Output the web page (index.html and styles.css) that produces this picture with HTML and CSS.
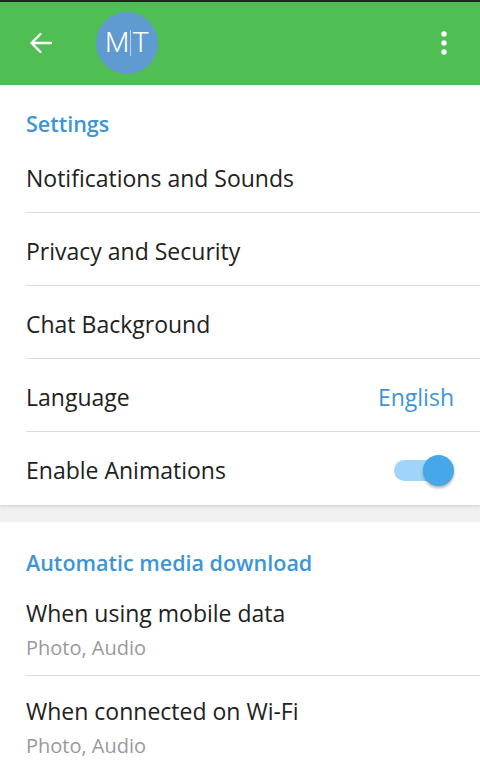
FILE: index.html
```html
<!DOCTYPE html>
<html lang="en">

<head>
  <meta charset="UTF-8">
  <title>Settings</title>
  <link rel="stylesheet" href="styles.css">
</head>

<body>
  <div class="status-line"></div>

  <!-- Header -->
  <header class="header">
    <button class="icon-button back-button">
      <svg width="26" height="26" viewBox="0 0 26 26">
        <path d="M23 13H3.5M12.5 4L3.5 13l9 9" fill="none" stroke="#fff" stroke-width="2.4" stroke-linecap="round" stroke-linejoin="round"/>
      </svg>
    </button>
    <div class="avatar">M<span class="caret"></span>T</div>
    <div class="spacer"></div>
    <button class="icon-button menu-button">
      <svg width="8" height="26" viewBox="0 0 8 26">
        <circle cx="4" cy="4" r="2.7" fill="#fff"/>
        <circle cx="4" cy="13" r="2.7" fill="#fff"/>
        <circle cx="4" cy="22" r="2.7" fill="#fff"/>
      </svg>
    </button>
  </header>

  <!-- Settings section -->
  <section class="section">
    <h2 class="section-title">Settings</h2>
    <div class="row">
      <span class="row-label">Notifications and Sounds</span>
    </div>
    <div class="row">
      <span class="row-label">Privacy and Security</span>
    </div>
    <div class="row">
      <span class="row-label">Chat Background</span>
    </div>
    <div class="row">
      <span class="row-label">Language</span>
      <span class="row-value">English</span>
    </div>
    <div class="row last">
      <span class="row-label">Enable Animations</span>
      <span class="toggle on"><span class="toggle-thumb"></span></span>
    </div>
  </section>

  <div class="section-gap"></div>

  <!-- Media section -->
  <section class="section">
    <h2 class="section-title media-title">Automatic media download</h2>
    <div class="row two-line">
      <span class="row-label">When using mobile data</span>
      <span class="row-sub">Photo, Audio</span>
    </div>
    <div class="row two-line last">
      <span class="row-label">When connected on Wi-Fi</span>
      <span class="row-sub">Photo, Audio</span>
    </div>
  </section>
</body>

</html>
```

FILE: styles.css
```css
body {
  margin: 0;
  padding: 0;
  background-color: #f0f0f0;
  font-family: "Open Sans", "Noto Sans", sans-serif;
  overflow: hidden;
}

.status-line {
  height: 2px;
  background-color: #222;
}

.header {
  display: flex;
  align-items: center;
  height: 83px;
  padding: 0 32px 0 28px;
  background-color: #4fbf53;
  box-sizing: border-box;
}

.icon-button {
  display: flex;
  align-items: center;
  justify-content: center;
  padding: 0;
  border: none;
  background: none;
  cursor: pointer;
}

.back-button {
  width: 26px;
  height: 26px;
  margin-top: -2px;
}

.avatar {
  display: flex;
  align-items: center;
  justify-content: center;
  width: 62px;
  height: 62px;
  margin-left: 42px;
  margin-top: -2px;
  border-radius: 50%;
  background-color: #5f9bd0;
  color: #fff;
  font-family: "Roboto", sans-serif;
  font-weight: 300;
  font-size: 28px;
}

.caret {
  display: inline-block;
  width: 1px;
  height: 26px;
  margin: 0 1px 0 1px;
  background-color: #b8d4ef;
}

.spacer {
  flex: 1;
}

.menu-button {
  width: 8px;
  height: 26px;
  margin-top: -2px;
}

.section {
  background-color: #fff;
  padding-left: 26px;
}

.section:first-of-type {
  box-shadow: 0 1px 3px rgba(0, 0, 0, 0.15);
}

.section-title {
  margin: 0;
  padding: 26px 0 0;
  height: 55px;
  box-sizing: border-box;
  font-size: 21.5px;
  font-weight: 600;
  line-height: 26px;
  color: #3d95d6;
}

.media-title {
  padding-top: 28px;
  height: 56px;
}

.row {
  display: flex;
  align-items: center;
  justify-content: space-between;
  height: 73px;
  padding-top: 3px;
  padding-right: 26px;
  border-bottom: 1px solid #dcdcdc;
  box-sizing: border-box;
}

.row.last {
  border-bottom: none;
}

.row-label {
  font-size: 23px;
  line-height: 30px;
  color: #212121;
}

.row-value {
  font-size: 23px;
  line-height: 30px;
  color: #3d95d6;
}

.row.two-line {
  flex-direction: column;
  align-items: flex-start;
  justify-content: flex-start;
  height: 98px;
  padding-top: 20px;
  gap: 7px;
}

.row-sub {
  font-size: 20px;
  line-height: 26px;
  color: #9a9a9a;
}

.toggle {
  position: relative;
  width: 56px;
  height: 21px;
  margin-right: 4px;
  border-radius: 11px;
  background-color: #a0d4f9;
}

.toggle-thumb {
  position: absolute;
  top: -5px;
  right: -4px;
  width: 31px;
  height: 31px;
  border-radius: 50%;
  background-color: #46a8e9;
  box-shadow: 0 2px 3px rgba(0, 0, 0, 0.3);
}

.section-gap {
  height: 17px;
}
```
